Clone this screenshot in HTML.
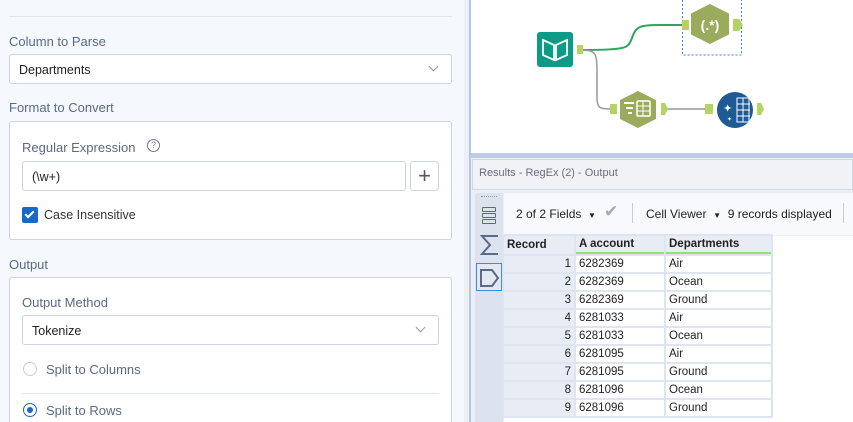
<!DOCTYPE html>
<html><head><style>
*{margin:0;padding:0;box-sizing:border-box}
html,body{width:853px;height:422px;overflow:hidden}
body{position:relative;background:#fff;font-family:"Liberation Sans",sans-serif}
.a{position:absolute}
.lbl{color:#5a6a85;font-size:13px}
.box{background:#fff;border:1px solid #cdd5e3;border-radius:3px}
.tx{font-size:12.5px;color:#222}
.chev{position:absolute;width:7px;height:7px;border-right:1.5px solid #8a96ab;border-bottom:1.5px solid #8a96ab;transform:rotate(45deg)}
table{border-collapse:separate;border-spacing:2px;font-size:11.5px;color:#222}
td{height:16px;padding:0 3px;line-height:16px}
</style></head><body>
<div class="a" style="left:0;top:0;width:464px;height:422px;background:#f5f8fd"></div>
<div class="a" style="left:464px;top:0;width:5px;height:422px;background:#eceff5"></div>
<div class="a" style="left:469px;top:0;width:2px;height:422px;background:#b6c5e2"></div>
<div class="a" style="left:9px;top:16px;width:443px;height:1px;background:#e2e7ef"></div>
<div class="a lbl" style="left:9px;top:34px">Column to Parse</div>
<div class="a box" style="left:9px;top:54px;width:443px;height:30px"><span class="a tx" style="left:9px;top:8px">Departments</span><div class="chev" style="right:14px;top:8px"></div></div>
<div class="a lbl" style="left:9px;top:100px">Format to Convert</div>
<div class="a box" style="left:9px;top:121px;width:443px;height:119px"></div>
<div class="a lbl" style="left:22px;top:140px">Regular Expression</div>
<div class="a" style="left:147px;top:139px;width:13px;height:13px;border:1.3px solid #6b7a96;border-radius:50%;font-size:9px;color:#6b7a96;text-align:center;line-height:11px">?</div>
<div class="a box" style="left:22px;top:161px;width:384px;height:30px"><span class="a tx" style="left:9px;top:8px">(\w+)</span></div>
<div class="a box" style="left:410px;top:161px;width:29px;height:30px;font-size:22px;color:#556;text-align:center;line-height:27px">+</div>
<div class="a" style="left:22px;top:207px;width:16px;height:16px;background:#1769c9;border-radius:2px"><div class="a" style="left:5px;top:2px;width:5px;height:9px;border-right:2px solid #fff;border-bottom:2px solid #fff;transform:rotate(45deg)"></div></div>
<div class="a tx" style="left:44px;top:208px;color:#333">Case Insensitive</div>
<div class="a lbl" style="left:9px;top:257px">Output</div>
<div class="a box" style="left:9px;top:277px;width:443px;height:150px"></div>
<div class="a lbl" style="left:22px;top:295px">Output Method</div>
<div class="a box" style="left:22px;top:315px;width:417px;height:30px"><span class="a tx" style="left:9px;top:8px">Tokenize</span><div class="chev" style="right:14px;top:8px"></div></div>
<div class="a" style="left:23px;top:362px;width:14px;height:14px;border:1.3px solid #c5cddb;border-radius:50%;background:#fff"></div>
<div class="a lbl" style="left:46px;top:362px">Split to Columns</div>
<div class="a" style="left:22px;top:393px;width:417px;height:1px;background:#e2e7ef"></div>
<div class="a" style="left:23px;top:403px;width:14px;height:14px;border:1.5px solid #1769c9;border-radius:50%;background:#fff"><div class="a" style="left:2.5px;top:2.5px;width:6px;height:6px;background:#1769c9;border-radius:50%"></div></div>
<div class="a lbl" style="left:46px;top:403px">Split to Rows</div>

<svg class="a" style="left:0;top:0" width="853" height="154">
<path d="M583 50 C 628 50, 628 48, 632 38 C 636 26, 640 25, 660 25 L 683 25" stroke="#2fa35a" stroke-width="2" fill="none"/>
<path d="M583 50 C 596 50, 597 55, 597 70 L 597 98 C 597 108, 600 109, 611 109" stroke="#999" stroke-width="1.5" fill="none"/>
<path d="M667 109 L 706 109" stroke="#999" stroke-width="1.5" fill="none"/>
<rect x="682.5" y="-2" width="59" height="57" fill="none" stroke="#3b82d9" stroke-dasharray="2,2"/>
<rect x="537" y="32" width="36" height="35" rx="3" fill="#0d9a86"/>
<path d="M543 40 L554 45 L554 60 L543 55Z" fill="none" stroke="#fff" stroke-width="1.8"/>
<path d="M567 40 L556 45 L556 60 L567 55Z" fill="none" stroke="#fff" stroke-width="1.8"/>
<rect x="577" y="45" width="6" height="9" fill="#b4d365"/>
<polygon points="710,4 729,13.5 729,34.5 710,44 691,34.5 691,13.5" fill="#9bab5d"/>
<text x="710" y="30" font-family="Liberation Sans" font-weight="bold" font-size="14" fill="#fff" text-anchor="middle">(.*)</text>
<rect x="682" y="20" width="7" height="10" fill="#b4d365"/>
<path d="M733 19 L739 19 L743 25 L739 31 L733 31Z" fill="#b4d365"/>
<polygon points="638,91 656,100 656,119 638,128 620,119 620,100" fill="#9bab5d"/>
<rect x="624" y="102" width="10" height="2" fill="#fff"/><rect x="626" y="107" width="7" height="2" fill="#fff"/><rect x="628" y="112" width="4" height="2" fill="#fff"/>
<rect x="637" y="101" width="13" height="15" rx="1" fill="none" stroke="#fff" stroke-width="1.5"/>
<path d="M637 106 H650 M637 111 H650 M643 101 V116" stroke="#fff" stroke-width="1"/>
<rect x="610" y="104" width="7" height="10" fill="#b4d365"/>
<path d="M661 103 L665 103 L668 109 L665 115 L661 115Z" fill="#b4d365"/>
<circle cx="735" cy="110" r="18" fill="#1f5a94"/>
<path d="M737 98 H749 V122 H737Z M737 104 H750 M737 110 H750 M737 116 H750 M743 98 V122" fill="none" stroke="#fff" stroke-width="1"/>
<text x="723" y="112" font-size="11" fill="#fff">✦</text>
<text x="727" y="121" font-size="6" fill="#fff">✦</text>
<rect x="705" y="104" width="8" height="10" fill="#b4d365"/>
<path d="M757 103 L761 103 L764 109 L761 115 L757 115Z" fill="#b4d365"/>
</svg>
<div class="a" style="left:471px;top:153px;width:382px;height:5px;background:#bccbe6"></div>
<div class="a" style="left:471px;top:158px;width:382px;height:264px;background:#e9eef7"></div>
<div class="a" style="left:472px;top:159px;width:381px;height:31px;background:#f0f2f6;border:1px solid #d3d9e4"></div>
<div class="a" style="left:479px;top:167px;font-size:11px;color:#6a6f7a">Results - RegEx (2) - Output</div>
<div class="a" style="left:475px;top:193px;width:28px;height:229px;background:#dce2ee;border-radius:3px 3px 0 0"></div>
<div class="a" style="left:481px;top:196px;width:16px;border-top:1px dotted #999"></div>
<div class="a" style="left:482px;top:207px;width:14px;height:5px;border:1.5px solid #5c6a86;border-radius:1px"></div>
<div class="a" style="left:482px;top:213px;width:14px;height:5px;border:1.5px solid #5c6a86;border-radius:1px"></div>
<div class="a" style="left:482px;top:219px;width:14px;height:5px;border:1.5px solid #5c6a86;border-radius:1px"></div>
<svg class="a" style="left:479px;top:234px" width="22" height="22"><path d="M19 2 H3 L11 11 L3 20 H19" fill="none" stroke="#5c6a86" stroke-width="2"/></svg>
<div class="a" style="left:476px;top:263px;width:26px;height:28px;border:1.5px solid #3b8ee0;background:#e3e8f2"></div>
<svg class="a" style="left:479px;top:268px" width="22" height="20"><path d="M2 2 L13 2 L19 10 L13 18 L2 18Z" fill="none" stroke="#5c6a86" stroke-width="2"/></svg>
<div class="a" style="left:504px;top:193px;width:349px;height:42px;background:#f7f9fc"></div>
<div class="a" style="left:504px;top:236px;width:349px;height:186px;background:#fff"></div>
<div class="a" style="left:516px;top:207px;font-size:12px;color:#222">2 of 2 Fields &nbsp;<span style="font-size:8px">▼</span></div>
<div class="a" style="left:604px;top:202px;font-size:17px;color:#aaa">✔</div>
<div class="a" style="left:632px;top:203px;width:1px;height:20px;background:#ccc"></div>
<div class="a" style="left:646px;top:207px;font-size:12px;color:#222">Cell Viewer &nbsp;<span style="font-size:8px">▼</span>&nbsp; 9 records displayed</div>
<div class="a" style="left:843px;top:203px;width:1px;height:20px;background:#ccc"></div>
<table class="a" style="left:502px;top:234px;background:#dfe5f0">
<tr style="font-weight:bold;background:#e8ecf5"><td style="width:70px;background:#e8ecf5">Record</td><td style="width:88px;background:#e8ecf5;border-bottom:2px solid #8fe36a">A account</td><td style="width:105px;background:#e8ecf5;border-bottom:2px solid #8fe36a">Departments</td></tr>
<tr><td style="text-align:right;background:#e8ecf5">1</td><td style="background:#fff">6282369</td><td style="background:#fff">Air</td></tr>
<tr><td style="text-align:right;background:#e8ecf5">2</td><td style="background:#fff">6282369</td><td style="background:#fff">Ocean</td></tr>
<tr><td style="text-align:right;background:#e8ecf5">3</td><td style="background:#fff">6282369</td><td style="background:#fff">Ground</td></tr>
<tr><td style="text-align:right;background:#e8ecf5">4</td><td style="background:#fff">6281033</td><td style="background:#fff">Air</td></tr>
<tr><td style="text-align:right;background:#e8ecf5">5</td><td style="background:#fff">6281033</td><td style="background:#fff">Ocean</td></tr>
<tr><td style="text-align:right;background:#e8ecf5">6</td><td style="background:#fff">6281095</td><td style="background:#fff">Air</td></tr>
<tr><td style="text-align:right;background:#e8ecf5">7</td><td style="background:#fff">6281095</td><td style="background:#fff">Ground</td></tr>
<tr><td style="text-align:right;background:#e8ecf5">8</td><td style="background:#fff">6281096</td><td style="background:#fff">Ocean</td></tr>
<tr><td style="text-align:right;background:#e8ecf5">9</td><td style="background:#fff">6281096</td><td style="background:#fff">Ground</td></tr>
</table>
</body></html>
